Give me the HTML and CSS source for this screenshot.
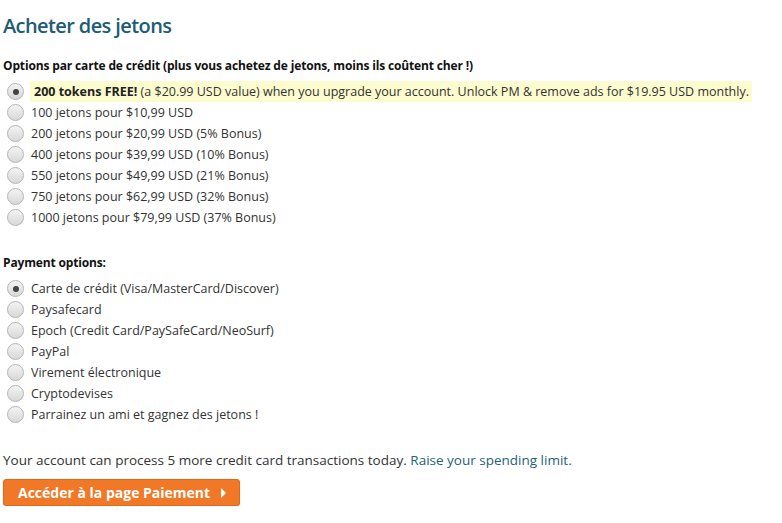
FILE: index.html
```html
<!DOCTYPE html>
<html lang="fr">
<head>
<meta charset="utf-8">
<title>Acheter des jetons</title>
<link rel="stylesheet" href="styles.css">
</head>
<body>
<div class="page">
  <h1 class="title">Acheter des jetons</h1>
  <p class="label">Options par carte de crédit (plus vous achetez de jetons, moins ils coûtent cher !)</p>
  <ul class="options">
    <li class="opt"><span class="radio checked"></span><span class="promo"><b>200 tokens FREE!</b> (a $20.99 USD value) when you upgrade your account. Unlock PM &amp; remove ads for $19.95 USD monthly.</span></li>
    <li class="opt"><span class="radio"></span><span>100 jetons pour $10,99 USD</span></li>
    <li class="opt"><span class="radio"></span><span>200 jetons pour $20,99 USD (5% Bonus)</span></li>
    <li class="opt"><span class="radio"></span><span>400 jetons pour $39,99 USD (10% Bonus)</span></li>
    <li class="opt"><span class="radio"></span><span>550 jetons pour $49,99 USD (21% Bonus)</span></li>
    <li class="opt"><span class="radio"></span><span>750 jetons pour $62,99 USD (32% Bonus)</span></li>
    <li class="opt"><span class="radio"></span><span>1000 jetons pour $79,99 USD (37% Bonus)</span></li>
  </ul>
  <p class="label label2">Payment options:</p>
  <ul class="options">
    <li class="opt"><span class="radio checked"></span><span>Carte de crédit (Visa/MasterCard/Discover)</span></li>
    <li class="opt"><span class="radio"></span><span>Paysafecard</span></li>
    <li class="opt"><span class="radio"></span><span>Epoch (Credit Card/PaySafeCard/NeoSurf)</span></li>
    <li class="opt"><span class="radio"></span><span>PayPal</span></li>
    <li class="opt"><span class="radio"></span><span>Virement électronique</span></li>
    <li class="opt"><span class="radio"></span><span>Cryptodevises</span></li>
    <li class="opt"><span class="radio"></span><span>Parrainez un ami et gagnez des jetons !</span></li>
  </ul>
  <p class="limit">Your account can process 5 more credit card transactions today. <a class="link" href="#">Raise your spending limit.</a></p>
  <button class="btn" type="button">Accéder à la page Paiement <span class="arrow"></span></button>
</div>
</body>
</html>
```
FILE: styles.css
```css
html, body {
  margin: 0;
  padding: 0;
  background: #ffffff;
}
.page {
  padding: 12px 0 0 3px;
  font-family: "Open Sans", "Noto Sans", sans-serif;
  font-size: 12.5px;
  color: #333333;
}
.title {
  margin: 0;
  font-size: 20px;
  font-weight: 600;
  letter-spacing: -0.6px;
  color: #1d5c74;
  line-height: 28px;
}
.label {
  margin: 17px 0 0 0;
  font-size: 12px;
  letter-spacing: -0.15px;
  font-weight: 700;
  color: #111111;
  line-height: 18px;
}
.label2 {
  margin-top: 26px;
}
.options {
  list-style: none;
  margin: 6px 0 0 0;
  padding: 0;
}
.opt {
  display: flex;
  align-items: center;
  height: 21px;
}
.radio {
  box-sizing: border-box;
  width: 17px;
  height: 17px;
  border-radius: 50%;
  border: 1px solid #b5b5b5;
  background: linear-gradient(#f4f4f4, #d8d8d8);
  margin: 0 7px 0 4px;
  flex: none;
  position: relative;
}
.radio.checked::after {
  content: "";
  position: absolute;
  left: 4.5px;
  top: 4.5px;
  width: 6px;
  height: 6px;
  border-radius: 50%;
  background: #444444;
}
.promo {
  background: #fdfccf;
  padding: 2px 3px 2px 4px;
  margin-left: -1px;
}
.promo b {
  color: #222222;
}
.limit {
  margin: 26px 0 0 0;
  font-size: 13.5px;
  line-height: 18px;
}
.link {
  color: #1f5f78;
  text-decoration: none;
}
.btn {
  margin-top: 10px;
  display: inline-flex;
  align-items: center;
  gap: 11px;
  height: 27px;
  padding: 0 13px 0 14px;
  background: #f07826;
  border: 1px solid #e06818;
  border-radius: 3px;
  color: #ffffff;
  font-family: "Open Sans", "Noto Sans", sans-serif;
  font-weight: 700;
  font-size: 14px;
  box-shadow: 0 1px 1px rgba(0,0,0,0.15);
}
.arrow {
  width: 0;
  height: 0;
  border-top: 5px solid transparent;
  border-bottom: 5px solid transparent;
  border-left: 5px solid #ffffff;
}
```
